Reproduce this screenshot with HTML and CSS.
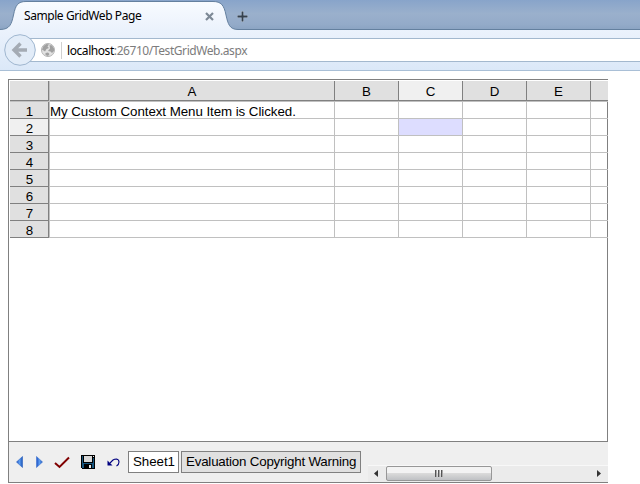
FILE: index.html
```
<!DOCTYPE html>
<html lang="en">
<head>
<meta charset="utf-8">
<title>Sample GridWeb Page</title>
<link rel="stylesheet" href="styles.css">
</head>
<body>
<header class="browser">
  <div class="tabs">
    <svg class="tab-shape" width="640" height="30" viewBox="0 0 640 30">
      <defs><linearGradient id="tabfill" x1="0" y1="0" x2="0" y2="1"><stop offset="0" stop-color="#f8fbff"/><stop offset="1" stop-color="#ebf2fc"/></linearGradient></defs>
      <path d="M0 30V29.5C10 29.5 11.5 24 13.500 15C15.500 5 18 1.500 26 1.500H213C221 1.500 224 5 226 15C228 24 229.500 29.500 238 29.500H640V30Z" fill="url(#tabfill)"/>
      <path d="M0 29.500C10 29.500 11.500 24 13.500 15C15.500 5 18 1.500 26 1.500H213C221 1.500 224 5 226 15C228 24 229.500 29.500 238 29.500H640" fill="none" stroke="#64809f"/>
    </svg>
    <span class="tab-title">Sample GridWeb Page</span>
    <svg class="close" width="9" height="9" viewBox="0 0 9 9"><path d="M1 1L8 8M8 1L1 8" stroke="#7d8996" stroke-width="2.200"/></svg>
    <svg class="plus" width="13" height="13" viewBox="0 0 13 13"><path d="M6.500 1V12M1 6.500H12" stroke="#b4c4d8" stroke-width="3"/><path d="M6.500 1.500V11.500M1.500 6.500H11.500" stroke="#35414e" stroke-width="1.800"/></svg>
  </div>
  <div class="toolbar">
    <div class="urlbar">
      <svg class="globe" width="14" height="14" viewBox="0 0 14 14"><circle cx="7" cy="7" r="6.500" fill="#e2e2e2" stroke="#b4b4b4"/><path d="M1 6.500L2.500 3L5.500 1L8 1.500L6.500 3.500L8 5L5.500 6L4 8.500ZM8.500 2L11 2.500L13 5.500V8L11 10L9.500 8.500L7 8L9 5.500ZM4.500 10L7 9.500L8.500 11L7 13L4.500 12Z" fill="#a0a0a0"/></svg>
      <span class="divider"></span>
      <span class="url"><b>localhost</b>:26710/TestGridWeb.aspx</span>
    </div>
    <svg class="back" width="32" height="32" viewBox="0 0 32 32"><circle cx="16" cy="16" r="15.300" fill="#e2ecf8" stroke="#9fb6cf"/><path d="M23 16H11M16.500 9.500L10 16L16.500 22.500" fill="none" stroke="#a4abb4" stroke-width="3.400"/></svg>
  </div>
</header>
<main class="gridweb">
  <div class="view">
    <div class="row head"><i class="corner"></i><b class="a">A</b><b>B</b><b class="active">C</b><b>D</b><b>E</b><b class="last"></b></div>
    <div class="row"><i>1</i><span class="a">My Custom Context Menu Item is Clicked.</span><span></span><span></span><span></span><span></span><span class="last"></span></div>
    <div class="row"><i class="active">2</i><span class="a"></span><span></span><span class="selected"></span><span></span><span></span><span class="last"></span></div>
    <div class="row"><i>3</i><span class="a"></span><span></span><span></span><span></span><span></span><span class="last"></span></div>
    <div class="row"><i>4</i><span class="a"></span><span></span><span></span><span></span><span></span><span class="last"></span></div>
    <div class="row"><i>5</i><span class="a"></span><span></span><span></span><span></span><span></span><span class="last"></span></div>
    <div class="row"><i>6</i><span class="a"></span><span></span><span></span><span></span><span></span><span class="last"></span></div>
    <div class="row"><i>7</i><span class="a"></span><span></span><span></span><span></span><span></span><span class="last"></span></div>
    <div class="row"><i>8</i><span class="a"></span><span></span><span></span><span></span><span></span><span class="last"></span></div>
  </div>
  <footer class="bottom">
    <div class="icons">
      <svg width="7" height="12" viewBox="0 0 7 12"><defs><linearGradient id="blue"><stop offset="0" stop-color="#1c4fc4"/><stop offset=".5" stop-color="#5b9cf0"/><stop offset="1" stop-color="#1c55b8"/></linearGradient></defs><path d="M6.500 .5V11.500L.5 6Z" fill="url(#blue)" stroke="#2c62c0" stroke-width=".6"/></svg>
      <svg class="next" width="7" height="12" viewBox="0 0 7 12"><path d="M.5 .5V11.500L6.500 6Z" fill="url(#blue)" stroke="#3c74d0" stroke-width=".6"/></svg>
      <svg class="check" width="16" height="13" viewBox="0 0 16 13"><path d="M1 7L5.500 11L15 1.500" fill="none" stroke="#800000" stroke-width="2"/></svg>
      <svg class="disk" width="14" height="14" viewBox="0 0 14 14" shape-rendering="crispEdges"><path d="M0 0H14V14H1L0 13Z" fill="#000"/><path d="M1 1H2V8H12V3H13V13H1Z" fill="#17567f"/><path d="M3 1H11V7H3Z" fill="#d8d8d8"/><path d="M3 9H11V14H3Z" fill="#000"/><path d="M8 10H10V13H8ZM12 1H13V2H12Z" fill="#e8e8e8"/></svg>
      <svg class="undo" width="13" height="9" viewBox="0 0 13 9"><path d="M3 5L6 2Q7.500 1 9.500 1Q12 1.500 12 4Q12 6.500 9.500 8" fill="none" stroke="#000080" stroke-width="1.100"/><path d="M.5 2.500V7.500H5.500Z" fill="#000080"/></svg>
    </div>
    <span class="sheet on">Sheet1</span>
    <span class="sheet warn">Evaluation Copyright Warning</span>
    <div class="scroll">
      <svg width="18" height="15" viewBox="0 0 18 15"><path d="M10 4V11L6 7.500Z" fill="#333"/></svg>
      <div class="thumb"><i></i><i></i><i></i></div>
      <svg class="right" width="18" height="15" viewBox="0 0 18 15"><path d="M9 4V11L13 7.500Z" fill="#333"/></svg>
    </div>
  </footer>
</main>
</body>
</html>
```
FILE: styles.css
```
* { box-sizing: border-box; }
body { margin: 0; width: 640px; height: 484px; overflow: hidden; background: #fff; font: 13.33px/16px "Liberation Sans", Arial, sans-serif; color: #000; }
svg { display: block; flex: none; }
.browser { height: 71px; font-family: "Noto Sans", "Open Sans", sans-serif; }
.tabs { position: relative; display: flex; align-items: center; height: 30px; padding: 2px 0 0 24px; background: linear-gradient(#88a4ca, #9ab0cc 45%, #94abc9 80%, #8aa3c2); }
.tab-shape { position: absolute; left: 0; top: 0; }
.tab-title { position: relative; width: 181px; font-size: 12px; letter-spacing: -0.43px; white-space: nowrap; }
.close { position: relative; }
.plus { position: relative; margin-left: 22px; }
.toolbar { position: relative; height: 41px; padding: 8px 0 0 20px; background: linear-gradient(#ebf2fc, #dbe8f8); border-bottom: 1px solid #a9bfd6; }
.urlbar { display: flex; align-items: center; height: 24px; padding-left: 21px; background: #fff; border: 1px solid #a3b8ce; border-width: 1px 0; }
.divider { width: 1px; height: 17px; margin: 0 5px 0 6px; background: #d0d0d0; }
.url { padding-top: 2px; font-size: 12px; letter-spacing: -0.43px; color: #7c7c7c; white-space: nowrap; }
.url b { font-weight: 400; color: #000; }
.back { position: absolute; left: 4px; top: 4px; }
.gridweb { width: 600px; height: 404px; margin: 8px 0 0 8px; border-left: 1px solid #808080; border-top: 1px solid #808080; }
.view { height: 362px; padding: 1px 0 0 1px; border-bottom: 1px solid #808080; background: linear-gradient(#808080, #808080) right 0 top 22px / 1px 341px no-repeat; }
.row { display: grid; grid-template-columns: 40px 285px repeat(4, 64px) 17px; grid-template-rows: 100%; height: 17px; }
.row > i { border-right: 1px solid #808080; border-bottom: 1px solid #808080; background: #e0e0e0; font-style: normal; text-align: center; margin-right: 1px; padding-left: 1px; box-shadow: 1px 0 #c0c0c0; line-height: 20px; }
.row > b { border-right: 1px solid #808080; border-bottom: 1px solid #808080; background: #e0e0e0; font-weight: 400; text-align: center; line-height: 21px; }
.row > span { border-right: 1px solid #c0c0c0; border-bottom: 1px solid #c0c0c0; line-height: 20px; letter-spacing: -0.06px; white-space: nowrap; }
.row > .active { background: #f0f0f0; }
.row > .selected { background: #ddf; }
.row > .last { border-right: 0; }
.head { height: 21px; border-bottom: 1px solid #c0c0c0; }
.bottom { display: flex; height: 41px; background: #efefef; border-bottom: 1px solid #808080; }
.icons { display: flex; align-items: center; width: 119px; padding-left: 7px; }
.next { margin-left: 13px; }
.check { margin-left: 11px; }
.disk { margin-left: 11px; }
.undo { margin-left: 12px; }
.sheet { height: 22px; margin-top: 9px; border: 1px solid #808080; padding-left: 4px; line-height: 20px; letter-spacing: -0.05px; white-space: nowrap; }
.on { width: 51px; background: #fff; }
.warn { width: 180px; margin-left: 2px; background: #e0e0e0; letter-spacing: -0.2px; }
.scroll { display: flex; width: 240px; height: 17px; margin: 23px 0 0 7px; border-top: 1px solid #f8f8f8; background: #ebebeb; }
.thumb { display: flex; justify-content: center; align-items: center; gap: 1px; width: 106px; height: 15px; border: 1px solid #979797; border-radius: 2px; background: linear-gradient(#f3f3f3 0 45%, #dadada 50%, #bfc1c4); }
.thumb i { width: 2px; height: 7px; background: linear-gradient(90deg, #555 50%, #aaa 50%); }
.right { margin-left: 96px; }
```
